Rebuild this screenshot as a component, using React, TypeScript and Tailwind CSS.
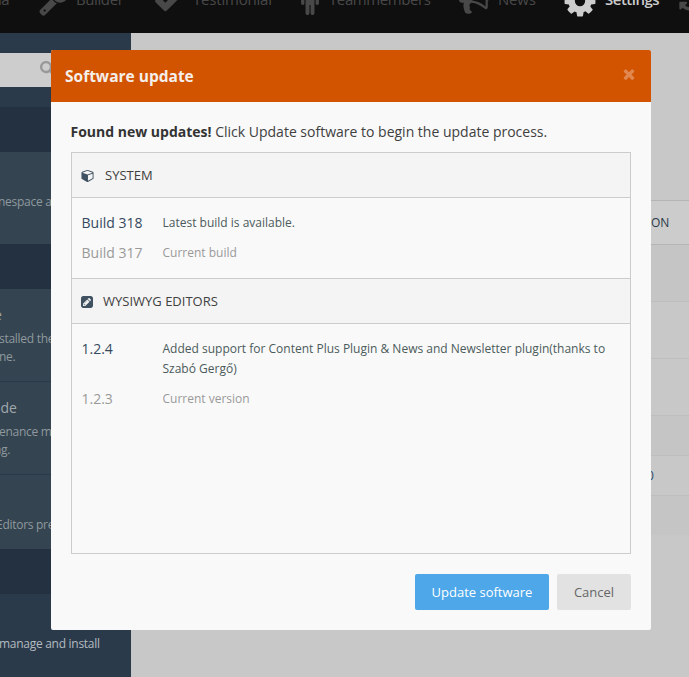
import type { ReactNode } from 'react';
import { FaSearch, FaSyncAlt } from 'react-icons/fa';

const icons = {
  wrench: 'M448 1472q0-26-19-45t-45-19-45 19-19 45 19 45 45 19 45-19 19-45zm644-420l-682 682q-37 37-90 37-52 0-91-37l-106-108q-38-36-38-90 0-53 38-91l681-681q39 98 114.5 173.5t173.5 114.5zm634-435q0 39-23 106-47 134-164.5 217.5t-258.5 83.5q-185 0-316.5-131.5t-131.5-316.5 131.5-316.5 316.5-131.5q58 0 121.5 16.5t107.5 46.5q16 11 16 28t-16 28l-293 169v224l193 107q5-3 79-48.5t135.5-81 70.5-35.5q15 0 23.5 10t8.5 25z',
  check: 'M1671 566q0 40-28 68l-724 724-136 136q-28 28-68 28t-68-28l-136-136-362-362q-28-28-28-68t28-68l136-136q28-28 68-28t68 28l294 295 656-657q28-28 68-28t68 28l136 136q28 28 28 68z',
  male: 'M1024 576v416q0 40-28 68t-68 28-68-28-28-68v-352h-64v912q0 46-33 79t-79 33-79-33-33-79v-464h-64v464q0 46-33 79t-79 33-79-33-33-79v-912h-64v352q0 40-28 68t-68 28-68-28-28-68v-416q0-80 56-136t136-56h640q80 0 136 56t56 136zM736 224a224 224 0 1 1-448 0 224 224 0 1 1 448 0z',
  bullhorn: 'M1664 640q53 0 90.5 37.5t37.5 90.5-37.5 90.5-90.5 37.5v384q0 52-38 90t-90 38q-417-347-812-380-58 19-91 66t-31 100.5 40 92.5q-20 33-23 65.5t6 58 33.5 55 48 50 61.5 50.5q-29 58-111.5 83t-168.5 11.5-132-55.5q-7-23-29.5-87.5t-32-94.5-23-89-15-101 3.5-98.5 22-110.5h-122q-66 0-113-47t-47-113v-192q0-66 47-113t113-47h480q435 0 896-384 52 0 90 38t38 90v384zm-128 604v-954q-394 302-768 343v270q377 42 768 341z',
  cog: 'M1152 896q0-106-75-181t-181-75-181 75-75 181 75 181 181 75 181-75 75-181zm512-109v222q0 12-8 23t-20 13l-185 28q-19 54-39 91 35 50 107 138 10 12 10 25t-9 23q-27 37-99 108t-94 71q-12 0-26-9l-138-108q-44 23-91 38-16 136-29 186-7 28-36 28h-222q-14 0-24.5-8.5t-11.5-21.5l-28-184q-49-16-90-37l-141 107q-10 9-25 9-14 0-25-11-126-114-165-168-7-10-7-23 0-12 8-23 15-21 51-66.5t54-70.5q-27-50-41-99l-183-27q-13-2-21-12.5t-8-23.5v-222q0-12 8-23t19-13l186-28q14-46 39-92-40-57-107-138-10-12-10-24 0-10 9-23 26-36 98.5-107.5t94.5-71.5q13 0 26 10l138 107q44-23 91-38 16-136 29-186 7-28 36-28h222q14 0 24.5 8.5t11.5 21.5l28 184q49 16 90 37l142-107q9-9 24-9 13 0 25 10 129 119 165 170 7 8 7 22 0 12-8 23-15 21-51 66.5t-54 70.5q26 50 41 98l183 28q13 2 21 12.5t8 23.5z',
  times: 'M1490 1322q0 40-28 68l-136 136q-28 28-68 28t-68-28l-294-294-294 294q-28 28-68 28t-68-28l-136-136q-28-28-28-68t28-68l294-294-294-294q-28-28-28-68t28-68l136-136q28-28 68-28t68 28l294 294 294-294q28-28 68-28t68 28l136 136q28 28 28 68t-28 68l-294 294 294 294q28 28 28 68z',
  cube: 'M896 1629l640-349v-636l-640 233v752zm-64-865l698-254-698-254-698 254zm832-252v768q0 35-18 65t-49 47l-704 384q-28 16-61 16t-61-16l-704-384q-31-17-49-47t-18-65v-768q0-40 23-73t61-47l704-256q22-8 44-8t44 8l704 256q38 14 61 47t23 73z',
  pencilSquare: 'M404 1108l152 152-52 52h-56v-96h-96v-56zm414-390q14 13-3 30l-291 291q-17 17-30 3-14-13 3-30l291-291q17-17 30-3zm-274 690l544-544-288-288-544 544v288h288zm608-608l92-92q28-28 28-68t-28-68l-152-152q-28-28-68-28t-68 28l-92 92zm384-384v960q0 119-84.5 203.5t-203.5 84.5h-960q-119 0-203.5-84.5t-84.5-203.5v-960q0-119 84.5-203.5t203.5-84.5h960q119 0 203.5 84.5t84.5 203.5z',
};

function Icon({ name, className, box = '0 0 1792 1792' }: { name: keyof typeof icons; className: string; box?: string }) {
  return (
    <svg viewBox={box} className={`shrink-0 ${className}`} fill="currentColor">
      <path d={icons[name]} />
    </svg>
  );
}

function NavItem({ icon, label, className, active = false }: { icon: ReactNode; label: string; className: string; active?: boolean }) {
  return (
    <div className={`flex h-full shrink-0 items-center ${active ? 'text-[#cdcdcd]' : 'text-[#484848]'} ${className}`}>
      {icon}
      <span className="-mt-[2px] text-[15px] leading-5">{label}</span>
    </div>
  );
}

function SideHeading() {
  return <div className="h-[45px] shrink-0 bg-[#233140]" />;
}

function Release({ version, text, current = false }: { version: string; text: string; current?: boolean }) {
  return (
    <div className={`flex ${current ? 'text-[#999999]' : 'text-[#34495e]'}`}>
      <div className="w-[81px] shrink-0 text-[14px] leading-5">{version}</div>
      <div className={`w-[455px] text-[12px] leading-5 ${current ? '' : 'text-[#4b5b5b]'}`}>{text}</div>
    </div>
  );
}

export default function App() {
  return (
    <div className="relative flex h-[677px] w-[689px] flex-col overflow-hidden bg-[#c8c8c8] font-['Open_Sans','Noto_Sans',sans-serif]">
      <nav className="h-[33px] w-full shrink-0 overflow-hidden bg-[#0f0f0f]">
        <div className="-mt-[33px] flex h-[66px]">
          <NavItem className="w-[38px] tracking-[-0.6px] -indent-[2px]" label="ia" icon={null} />
          <NavItem className="w-[115px] gap-[7px] tracking-[-0.4px]" label="Builder" icon={<Icon name="wrench" className="h-[31px] w-[31px]" />} />
          <NavItem className="w-[148px] gap-[9px] tracking-[-0.2px]" label="Testimonial" icon={<Icon name="check" className="h-[31px] w-[31px]" />} />
          <NavItem className="w-[158px] gap-[10px] tracking-[-0.4px]" label="Teammembers" icon={<Icon name="male" box="0 0 1024 1664" className="mt-px h-[29px] w-[18px]" />} />
          <NavItem className="w-[103px] gap-[8px] tracking-[-0.2px]" label="News" icon={<Icon name="bullhorn" className="h-[31px] w-[31px]" />} />
          <NavItem active className="w-[117px] gap-[7px] font-semibold tracking-[-0.5px]" label="Settings" icon={<Icon name="cog" className="mt-[2px] h-[36px] w-[36px]" />} />
          <NavItem className="w-[40px]" label="" icon={<FaSyncAlt className="h-[22px] w-[22px]" />} />
        </div>
      </nav>
      <div className="flex min-h-0 flex-1">
        <aside className="flex w-[131px] shrink-0 flex-col overflow-hidden whitespace-nowrap bg-[#2b3a4a] text-[12px] leading-[18px] tracking-[-0.28px] text-[#8f999f]">
          <div className="h-[74px] shrink-0 pt-5">
            <div className="flex h-[34px] items-center bg-[#cdcdcd] pl-10 text-[#999999]">
              <FaSearch className="-mt-1 h-[15px] w-[15px]" />
            </div>
          </div>
          <SideHeading />
          <div className="h-[92px] shrink-0 bg-[#344450] pt-[41px]">
            <p className="-ml-[2px]">nespace a</p>
          </div>
          <SideHeading />
          <div className="h-[93px] shrink-0 border-b border-[#2b3a4a] bg-[#344450] pt-[16px]">
            <p className="-ml-[6px] text-[14px] leading-5 text-[#a0a8ac]">e</p>
            <p className="-ml-[1px] mt-[5px]">stalled the</p>
            <p className="-ml-[1px]">ne.</p>
          </div>
          <div className="h-[93px] shrink-0 border-b border-[#2b3a4a] bg-[#344450] pt-[16px]">
            <p className="-ml-[8px] text-[14px] leading-5 tracking-normal text-[#a0a8ac]">ode</p>
            <p className="-ml-[1px] mt-[5px]">enance m</p>
            <p className="-ml-[6px]">ng.</p>
          </div>
          <div className="h-[74px] shrink-0 bg-[#344450] pt-[41px]">
            <p className="-ml-[4px]">Editors pre</p>
          </div>
          <SideHeading />
          <p className="-ml-[1px] mt-[41px] text-[#b3bac0]">manage and install</p>
        </aside>
        <main className="flex-1 pt-[167px] text-[12px]">
          <div className="flex h-[45px] items-center border-y border-[#b4b4b4] bg-[#cccccc] pl-[520px] text-[#2b3a4a]">ON</div>
          <div className="h-[57px] border-b border-[#bebebe] bg-[#c5c5c5]" />
          <div className="h-[57px] border-b border-[#bebebe]" />
          <div className="h-[57px] border-b border-[#bebebe]" />
          <div className="h-[40px] border-b border-[#bebebe] bg-[#c5c5c5]" />
          <div className="flex h-[40px] items-center border-b border-[#bebebe] pl-[516px] text-[#2b4a6a]">0</div>
          <div className="h-[39px] bg-[#c5c5c5]" />
        </main>
      </div>

      <section className="absolute left-[51px] top-[50px] flex h-[580px] w-[600px] flex-col overflow-hidden rounded-[2px] bg-[#f9f9f9]">
        <header className="flex h-[52px] shrink-0 items-center justify-between bg-[#d35400] pl-[14px] pr-[14px]">
          <h1 className="text-[15.5px] font-bold leading-5 text-[#f5eee9]">Software update</h1>
          <Icon name="times" className="-mt-[4px] h-[16px] w-[16px] text-[#e08850]" />
        </header>
        <div className="flex flex-1 flex-col px-5 pb-5 pt-5">
          <p className="-ml-[0.5px] text-[14px] leading-5 text-[#404040]">
            <strong className="font-bold text-[#333333]">Found new updates!</strong> Click Update software to begin the update process.
          </p>
          <div className="mt-[10px] h-[402px] border border-[#cccccc]">
            <h2 className="flex h-[45px] items-center border-b border-[#cccccc] bg-[#f4f4f4] pl-[9px] pt-px text-[13px] text-[#404040]">
              <Icon name="cube" box="0 0 1664 1792" className="mr-[11px] h-[13px] w-[13px] text-[#405261]" />
              SYSTEM
            </h2>
            <div className="flex h-[80px] flex-col gap-[10px] pl-[9.5px] pt-[15px]">
              <Release version="Build 318" text="Latest build is available." />
              <Release current version="Build 317" text="Current build" />
            </div>
            <h2 className="flex h-[46px] items-center border-y border-[#cccccc] bg-[#f4f4f4] pl-[9px] pt-px text-[13px] text-[#404040]">
              <Icon name="pencilSquare" box="0 128 1536 1536" className="mr-[10px] h-[12px] w-[12px] text-[#405261]" />
              WYSIWYG EDITORS
            </h2>
            <div className="flex flex-col gap-[10px] pl-[9.5px] pt-[15px]">
              <Release version="1.2.4" text="Added support for Content Plus Plugin & News and Newsletter plugin(thanks to Szabó Gergő)" />
              <Release current version="1.2.3" text="Current version" />
            </div>
          </div>
          <footer className="mt-5 flex justify-end gap-2 text-[13px]">
            <button className="h-9 w-[134px] rounded-[2px] bg-[#4da7e8] pt-px font-medium text-white">Update software</button>
            <button className="h-9 w-[74px] rounded-[2px] bg-[#e2e2e2] pt-px text-[#666666]">Cancel</button>
          </footer>
        </div>
      </section>
    </div>
  );
}
